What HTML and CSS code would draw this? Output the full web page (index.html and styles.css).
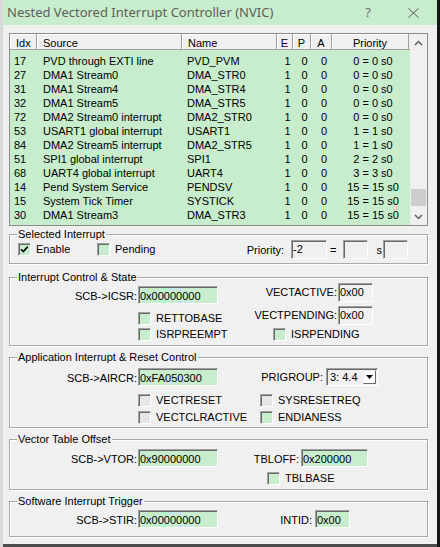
FILE: index.html
```html
<!DOCTYPE html>
<html>
<head>
<meta charset="utf-8">
<title>NVIC</title>
<link rel="stylesheet" href="styles.css">
</head>
<body>
<div class="screen">
  <div class="strip-left"></div>
  <div class="window">
    <div class="titlebar">
      <span class="title">Nested Vectored Interrupt Controller (NVIC)</span>
      <span class="help">?</span>
      <svg class="close" width="11" height="10" viewBox="0 0 11 10"><path d="M0.5 0.5 L10.5 9.5 M10.5 0.5 L0.5 9.5" stroke="#555" stroke-width="1" fill="none"/></svg>
    </div>
    <div class="content">
      <div class="listview">
        <div class="lv-main">
          <div class="lv-head">
            <span class="hc idx">Idx</span><span class="hc src">Source</span><span class="hc nm">Name</span><span class="hc e">E</span><span class="hc p">P</span><span class="hc a">A</span><span class="hc pr">Priority</span>
          </div>
          <div class="lv-rows">
            <div class="r"><span class="c idx">17</span><span class="c src">PVD through EXTI line</span><span class="c nm">PVD_PVM</span><span class="c e">1</span><span class="c p">0</span><span class="c a">0</span><span class="c pr">0 = 0 s0</span></div>
            <div class="r"><span class="c idx">27</span><span class="c src">DMA1 Stream0</span><span class="c nm">DMA_STR0</span><span class="c e">1</span><span class="c p">0</span><span class="c a">0</span><span class="c pr">0 = 0 s0</span></div>
            <div class="r"><span class="c idx">31</span><span class="c src">DMA1 Stream4</span><span class="c nm">DMA_STR4</span><span class="c e">1</span><span class="c p">0</span><span class="c a">0</span><span class="c pr">0 = 0 s0</span></div>
            <div class="r"><span class="c idx">32</span><span class="c src">DMA1 Stream5</span><span class="c nm">DMA_STR5</span><span class="c e">1</span><span class="c p">0</span><span class="c a">0</span><span class="c pr">0 = 0 s0</span></div>
            <div class="r"><span class="c idx">72</span><span class="c src">DMA2 Stream0 interrupt</span><span class="c nm">DMA2_STR0</span><span class="c e">1</span><span class="c p">0</span><span class="c a">0</span><span class="c pr">0 = 0 s0</span></div>
            <div class="r"><span class="c idx">53</span><span class="c src">USART1 global interrupt</span><span class="c nm">USART1</span><span class="c e">1</span><span class="c p">0</span><span class="c a">0</span><span class="c pr">1 = 1 s0</span></div>
            <div class="r"><span class="c idx">84</span><span class="c src">DMA2 Stream5 interrupt</span><span class="c nm">DMA2_STR5</span><span class="c e">1</span><span class="c p">0</span><span class="c a">0</span><span class="c pr">1 = 1 s0</span></div>
            <div class="r"><span class="c idx">51</span><span class="c src">SPI1 global interrupt</span><span class="c nm">SPI1</span><span class="c e">1</span><span class="c p">0</span><span class="c a">0</span><span class="c pr">2 = 2 s0</span></div>
            <div class="r"><span class="c idx">68</span><span class="c src">UART4 global interrupt</span><span class="c nm">UART4</span><span class="c e">1</span><span class="c p">0</span><span class="c a">0</span><span class="c pr">3 = 3 s0</span></div>
            <div class="r"><span class="c idx">14</span><span class="c src">Pend System Service</span><span class="c nm">PENDSV</span><span class="c e">1</span><span class="c p">0</span><span class="c a">0</span><span class="c pr">15 = 15 s0</span></div>
            <div class="r"><span class="c idx">15</span><span class="c src">System Tick Timer</span><span class="c nm">SYSTICK</span><span class="c e">1</span><span class="c p">0</span><span class="c a">0</span><span class="c pr">15 = 15 s0</span></div>
            <div class="r"><span class="c idx">30</span><span class="c src">DMA1 Stream3</span><span class="c nm">DMA_STR3</span><span class="c e">1</span><span class="c p">0</span><span class="c a">0</span><span class="c pr">15 = 15 s0</span></div>
          </div>
        </div>
        <div class="vscroll">
          <div class="sb-btn"><svg width="9" height="6" viewBox="0 0 9 6"><polyline points="1,5 4.5,1.5 8,5" fill="none" stroke="#606060" stroke-width="1.5"/></svg></div>
          <div class="sb-track"><div class="sb-thumb"></div></div>
          <div class="sb-btn"><svg width="9" height="6" viewBox="0 0 9 6"><polyline points="1,1 4.5,4.5 8,1" fill="none" stroke="#606060" stroke-width="1.5"/></svg></div>
        </div>
      </div>

      <div class="group g1">
        <div class="gtitle">Selected Interrupt</div>
        <div class="g1row">
          <div class="chk enable"><span class="cb"><svg width="11" height="11" viewBox="0 0 11 11"><path d="M2 5.2 L4.3 7.6 L8.8 2.6" fill="none" stroke="#000" stroke-width="1.6"/></svg></span><span>Enable</span></div>
          <div class="chk"><span class="cb"></span><span>Pending</span></div>
          <div class="prio">
            <span class="prio-lbl">Priority:</span>
            <span class="field grey w36">-2</span>
            <span class="eq">=</span>
            <span class="field grey w25"></span>
            <span class="s">s</span>
            <span class="field grey w25"></span>
          </div>
        </div>
      </div>

      <div class="group g2">
        <div class="gtitle">Interrupt Control &amp; State</div>
        <div class="grow">
          <div class="lcell"><div class="pair mt3"><span class="lbl-l">SCB-&gt;ICSR:</span><span class="field w80">0x00000000</span></div></div>
          <div class="rcell"><div class="pair"><span class="lbl-r w118">VECTACTIVE:</span><span class="field grey w35">0x00</span></div></div>
        </div>
        <div class="grow">
          <div class="lcell"><div class="chk ml128 mt8"><span class="cb"></span><span>RETTOBASE</span></div></div>
          <div class="rcell"><div class="pair mt2"><span class="lbl-r w118">VECTPENDING:</span><span class="field grey w35">0x00</span></div></div>
        </div>
        <div class="grow mt3">
          <div class="lcell"><div class="chk ml128"><span class="cb"></span><span>ISRPREEMPT</span></div></div>
          <div class="rcell"><div class="chk ml54"><span class="cb"></span><span>ISRPENDING</span></div></div>
        </div>
      </div>

      <div class="group g3">
        <div class="gtitle">Application Interrupt &amp; Reset Control</div>
        <div class="grow">
          <div class="lcell"><div class="pair"><span class="lbl-l">SCB-&gt;AIRCR:</span><span class="field w80">0xFA050300</span></div></div>
          <div class="rcell"><div class="pair"><span class="lbl-r w104">PRIGROUP:</span>
            <div class="select"><span class="sel-text">3: 4.4</span><span class="sel-btn"><svg width="7" height="4" viewBox="0 0 7 4"><polygon points="0,0 7,0 3.5,4" fill="#000"/></svg></span></div>
          </div></div>
        </div>
        <div class="grow mt8">
          <div class="lcell"><div class="chk ml128"><span class="cb off"></span><span>VECTRESET</span></div></div>
          <div class="rcell"><div class="chk ml41"><span class="cb off"></span><span>SYSRESETREQ</span></div></div>
        </div>
        <div class="grow mt4">
          <div class="lcell"><div class="chk ml128"><span class="cb off"></span><span>VECTCLRACTIVE</span></div></div>
          <div class="rcell"><div class="chk ml41"><span class="cb"></span><span>ENDIANESS</span></div></div>
        </div>
      </div>

      <div class="group g4">
        <div class="gtitle">Vector Table Offset</div>
        <div class="grow">
          <div class="lcell"><div class="pair"><span class="lbl-l">SCB-&gt;VTOR:</span><span class="field w80">0x90000000</span></div></div>
          <div class="rcell"><div class="pair"><span class="lbl-r w80">TBLOFF:</span><span class="field w67">0x200000</span></div></div>
        </div>
        <div class="grow mt5">
          <div class="lcell"></div>
          <div class="rcell"><div class="chk ml48"><span class="cb"></span><span>TBLBASE</span></div></div>
        </div>
      </div>

      <div class="group g5">
        <div class="gtitle">Software Interrupt Trigger</div>
        <div class="grow">
          <div class="lcell"><div class="pair"><span class="lbl-l">SCB-&gt;STIR:</span><span class="field w80">0x00000000</span></div></div>
          <div class="rcell"><div class="pair"><span class="lbl-r w93">INTID:</span><span class="field w35">0x00</span></div></div>
        </div>
      </div>
    </div>
  </div>
  <div class="strip-right"></div>
</div>
</body>
</html>
```

FILE: styles.css
```css
* { box-sizing: border-box; }
html, body { margin: 0; padding: 0; }
body {
  width: 440px; height: 547px; overflow: hidden;
  background: #4d4d4d;
  font-family: "Liberation Sans", Arial, sans-serif;
  font-size: 11px; color: #000;
}
.screen { display: flex; height: 547px; }
.strip-left { width: 3px; height: 547px; background: #d9d9d9; flex: none; }
.strip-right { width: 3px; height: 547px; background: #161616; flex: none; }
.window {
  width: 434px; height: 544px; flex: none;
  background: #f0f0f0;
  display: flex; flex-direction: column;
}
.titlebar {
  height: 25px; flex: none;
  background: #c7edcc;
  display: flex; align-items: center;
  padding-left: 4px;
  font-family: "Noto Sans", sans-serif; font-size: 13px; line-height: 25px;
  color: #5e5e5e;
}
.title { flex: 1; white-space: nowrap; }
.help { margin-right: 37px; color: #707070; }
.close { margin-right: 18px; }
.content { padding: 8px 9px 0 6px; }

/* list view */
.listview {
  height: 193px;
  border: 1px solid #8c8c8c;
  display: flex;
  background: #c7edcc;
}
.lv-main { width: 400px; display: flex; flex-direction: column; }
.lv-head {
  display: flex; height: 16px; flex: none;
  border-bottom: 1px solid #a0a0a0;
  background: #f0f0f0;
}
.hc {
  height: 15px; flex: none;
  border-right: 1px solid #a0a0a0;
  box-shadow: inset 1px 1px #fff;
  padding-top: 3px; line-height: 13px;
  white-space: nowrap; overflow: hidden;
}
.lv-rows { padding-top: 4px; flex: 1; }
.r { display: flex; height: 14px; line-height: 14px; }
.c { flex: none; white-space: nowrap; overflow: hidden; }
.idx { width: 27px; }
.src { width: 145px; }
.nm { width: 95px; }
.e { width: 16px; }
.p { width: 18px; }
.a { width: 21px; }
.pr { width: 77px; }
.hc.idx { padding-left: 6px; }
.hc.src, .hc.nm { padding-left: 6px; }
.hc.e, .hc.p, .hc.a, .hc.pr { text-align: center; }
.c.idx { padding-left: 4px; }
.c.src { padding-left: 6px; }
.c.nm { padding-left: 5px; }
.c.e, .c.p, .c.a, .c.pr { text-align: center; padding-left: 5px; }

.vscroll {
  width: 17px; flex: none;
  background: #f0f0f0;
  display: flex; flex-direction: column;
}
.sb-btn { height: 17px; flex: none; display: flex; align-items: center; justify-content: center; }
.sb-track { flex: 1; padding-top: 138px; }
.sb-thumb { height: 17px; margin: 0 1px; background: #cdcdcd; }

/* group boxes */
.group {
  position: relative;
  border: 1px solid #a8a8a8;
  box-shadow: inset 1px 1px #fff, 1px 1px #fff;
}
.gtitle {
  position: absolute; top: -8px; left: 7px;
  padding: 0 1px;
  background: #f0f0f0;
  line-height: 14px;
  white-space: nowrap;
}
.g1 { margin-top: 8px; padding: 5px 19px 4px 8px; }
.g2 { margin-top: 13px; padding: 5px 0 4px 0; }
.g3 { margin-top: 11px; padding: 10px 0 3px 0; }
.g4 { margin-top: 11px; padding: 9px 0 4px 0; }
.g5 { margin-top: 11px; padding: 8px 0 8px 0; }

.g1row { display: flex; align-items: center; height: 19px; }
.chk { display: flex; align-items: center; line-height: 13px; white-space: nowrap; }
.chk.enable { width: 79px; }
.cb {
  width: 13px; height: 13px; flex: none;
  border: 1px solid; border-color: #a0a0a0 #fff #fff #a0a0a0;
  box-shadow: inset 1px 1px #696969;
  background: #c7edcc;
  margin-right: 5px;
  display: flex;
}
.cb.off { background: #e6e6e6; }
.prio { margin-left: auto; display: flex; align-items: center; }
.prio-lbl { margin-right: 7px; }
.eq { margin: 0 6px 0 3px; }
.s { margin: 0 1px 0 9px; }

.field {
  height: 18px; flex: none;
  border: 1px solid; border-color: #a0a0a0 #fff #fff #a0a0a0;
  box-shadow: inset 1px 1px #696969;
  background: #c7edcc;
  padding: 3px 0 0 1px; line-height: 13px;
  white-space: nowrap; overflow: hidden;
}
.field.grey { background: #f0f0f0; height: 19px; padding-top: 2px; }
.w80 { width: 80px; }
.w67 { width: 67px; }
.w36 { width: 36px; }
.w35 { width: 35px; }
.w25 { width: 25px; }

.grow { display: flex; align-items: flex-start; }
.lcell { width: 209px; flex: none; }
.rcell { flex: 1; }
.pair { display: flex; align-items: baseline; }
.lbl-l { width: 127px; margin-right: 1px; text-align: right; white-space: nowrap; }
.lbl-r { text-align: right; white-space: nowrap; }
.lbl-r.w118 { width: 118px; margin-right: 1px; }
.lbl-r.w104 { width: 104px; margin-right: 3px; }
.lbl-r.w80 { width: 80px; margin-right: 2px; }
.lbl-r.w93 { width: 93px; margin-right: 3px; }

.mt2 { margin-top: 2px; }
.mt3 { margin-top: 3px; }
.mt4 { margin-top: 4px; }
.mt5 { margin-top: 5px; }
.mt8 { margin-top: 8px; }
.ml128 { margin-left: 128px; }
.ml54 { margin-left: 54px; }
.ml41 { margin-left: 41px; }
.ml48 { margin-left: 48px; }

.select {
  width: 52px; height: 18px; flex: none;
  display: flex;
  border: 1px solid; border-color: #a0a0a0 #fff #fff #a0a0a0;
  box-shadow: inset 1px 1px #696969;
  background: #f0f0f0;
  padding: 1px;
}
.sel-text { flex: 1; padding: 1px 0 0 2px; line-height: 13px; white-space: nowrap; }
.sel-btn {
  width: 13px; height: 14px; flex: none;
  background: #fdfdfd;
  border: 1px solid; border-color: #f0f0f0 #696969 #696969 #f0f0f0;
  display: flex; align-items: center; justify-content: center;
}
```
